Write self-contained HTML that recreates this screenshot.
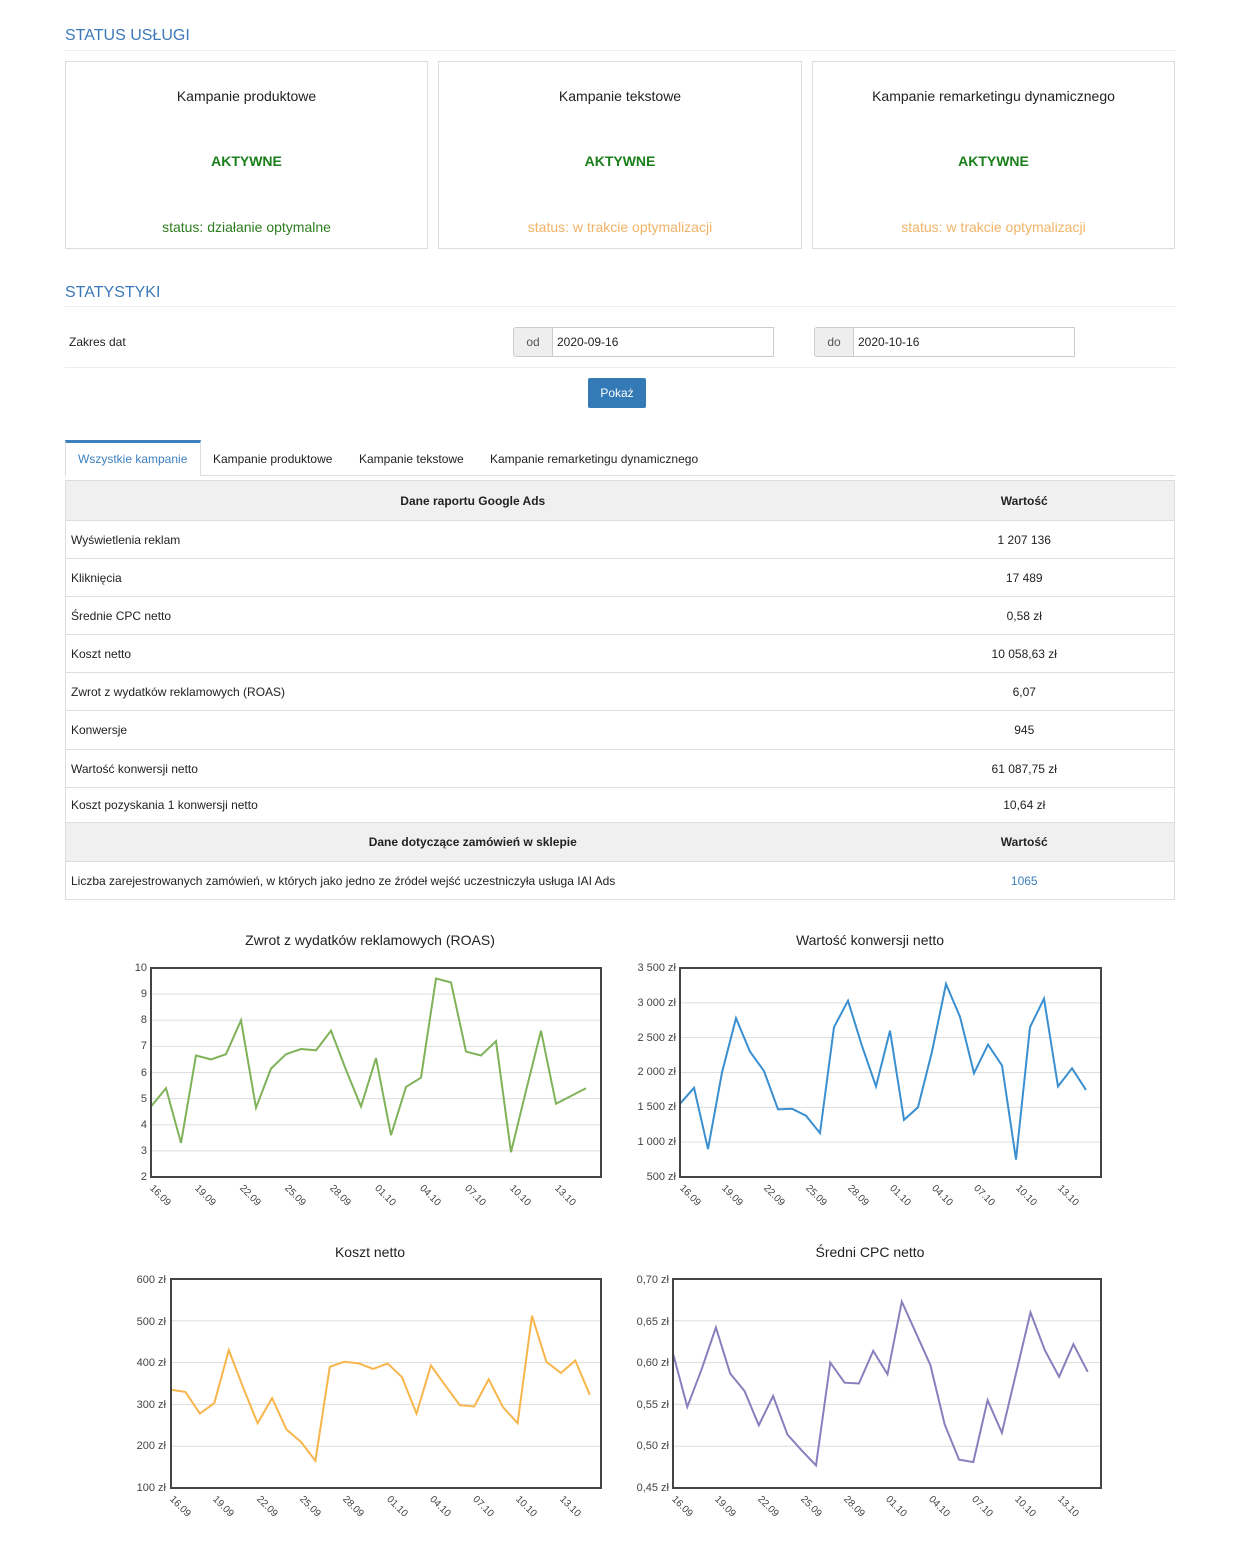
<!DOCTYPE html>
<html><head><meta charset="utf-8">
<style>
*{box-sizing:border-box;margin:0;padding:0}
body{width:1246px;height:1562px;background:#fff;font-family:"Liberation Sans",Arial,sans-serif;color:#222;position:relative;overflow:hidden}
.a{position:absolute}
.h{color:#3d78b8;font-size:16px;left:65px}
.hl{left:65px;width:1110px;height:1px;background:#eee}
.card{top:61px;height:188px;border:1px solid #ddd;text-align:center;font-size:14px}
.card .t{position:absolute;top:26px;left:0;right:0}
.card .k{position:absolute;top:91px;left:0;right:0;color:#1a7f1a;font-weight:bold}
.card .s{position:absolute;top:157px;left:0;right:0}
.or{color:#f2b366}.gr{color:#2e7d1e}
.addon{background:#eee;border:1px solid #ccc;border-radius:3px 0 0 3px;font-size:12px;color:#555;text-align:center;line-height:28px;height:30px;width:40px}
.inp{border:1px solid #ccc;font-size:12px;line-height:28px;height:30px;padding-left:4px}
table{border-collapse:collapse;font-size:12px}
td{border-top:1px solid #ddd;padding-left:5px}
.hd td{background:#f0f0f0;font-weight:bold;text-align:center}
td.v{text-align:center;width:300px;padding:0}
.ct{font-size:14px;text-align:center;width:500px}
.yl{display:flex;flex-direction:column;justify-content:space-between;text-align:right;font-size:11px;color:#444;line-height:14px}
.xl{font-size:10px;color:#444;transform:rotate(45deg);transform-origin:0 0;white-space:nowrap}
</style></head><body>
<div class="a h" style="top:27px">STATUS USŁUGI</div>
<div class="a hl" style="top:50px"></div>
<div class="a card" style="left:65px;width:363px"><div class="t">Kampanie produktowe</div><div class="k">AKTYWNE</div><div class="s gr">status: działanie optymalne</div></div>
<div class="a card" style="left:438px;width:364px"><div class="t">Kampanie tekstowe</div><div class="k">AKTYWNE</div><div class="s or">status: w trakcie optymalizacji</div></div>
<div class="a card" style="left:812px;width:363px"><div class="t">Kampanie remarketingu dynamicznego</div><div class="k">AKTYWNE</div><div class="s or">status: w trakcie optymalizacji</div></div>

<div class="a h" style="top:284px">STATYSTYKI</div>
<div class="a hl" style="top:306px"></div>
<div class="a" style="left:69px;top:335px;font-size:12px">Zakres dat</div>
<div class="a addon" style="left:513px;top:327px">od</div>
<div class="a inp" style="left:552px;top:327px;width:222px">2020-09-16</div>
<div class="a addon" style="left:814px;top:327px">do</div>
<div class="a inp" style="left:853px;top:327px;width:222px">2020-10-16</div>
<div class="a hl" style="top:367px"></div>
<div class="a" style="left:588px;top:378px;width:58px;height:30px;background:#337ab7;color:#fff;font-size:12px;text-align:center;line-height:30px;border-radius:2px">Pokaż</div>

<div class="a" style="left:65px;top:440px;width:136px;height:36px;border:1px solid #ddd;border-top:3px solid #3d80c0;border-bottom:none;background:#fff;z-index:2"></div>
<div class="a" style="left:65px;top:475px;width:1110px;height:1px;background:#ddd"></div>
<div class="a" style="left:78px;top:452px;font-size:12px;color:#3d80c0;z-index:3">Wszystkie kampanie</div>
<div class="a" style="left:213px;top:452px;font-size:12px">Kampanie produktowe</div>
<div class="a" style="left:359px;top:452px;font-size:12px">Kampanie tekstowe</div>
<div class="a" style="left:490px;top:452px;font-size:12px">Kampanie remarketingu dynamicznego</div>

<table class="a" style="left:65px;top:480px;width:1110px;border:1px solid #ddd">
<tr class="hd" style="height:40px"><td>Dane raportu Google Ads</td><td class="v">Wartość</td></tr>
<tr style="height:38px"><td>Wyświetlenia reklam</td><td class="v">1 207 136</td></tr>
<tr style="height:38px"><td>Kliknięcia</td><td class="v">17 489</td></tr>
<tr style="height:38px"><td>Średnie CPC netto</td><td class="v">0,58 zł</td></tr>
<tr style="height:38px"><td>Koszt netto</td><td class="v">10 058,63 zł</td></tr>
<tr style="height:38px"><td>Zwrot z wydatków reklamowych (ROAS)</td><td class="v">6,07</td></tr>
<tr style="height:39px"><td>Konwersje</td><td class="v">945</td></tr>
<tr style="height:38px"><td>Wartość konwersji netto</td><td class="v">61 087,75 zł</td></tr>
<tr style="height:35px"><td>Koszt pozyskania 1 konwersji netto</td><td class="v">10,64 zł</td></tr>
<tr class="hd" style="height:39px"><td>Dane dotyczące zamówień w sklepie</td><td class="v">Wartość</td></tr>
<tr style="height:38px"><td>Liczba zarejestrowanych zamówień, w których jako jedno ze źródeł wejść uczestniczyła usługa IAI Ads</td><td class="v" style="color:#3d80c0">1065</td></tr>
</table>

<svg class="a" style="left:0;top:0" width="1246" height="1562" id="sv"></svg>

<div class="a ct" style="left:120px;top:932px">Zwrot z wydatków reklamowych (ROAS)</div>
<div class="a ct" style="left:620px;top:932px">Wartość konwersji netto</div>
<div class="a ct" style="left:120px;top:1244px">Koszt netto</div>
<div class="a ct" style="left:620px;top:1244px">Średni CPC netto</div>

<div class="a yl" style="left:100px;width:47px;top:961px;height:223px"><span>10</span><span>9</span><span>8</span><span>7</span><span>6</span><span>5</span><span>4</span><span>3</span><span>2</span></div>
<div class="a yl" style="left:600px;width:76px;top:961px;height:223px"><span>3 500 zł</span><span>3 000 zł</span><span>2 500 zł</span><span>2 000 zł</span><span>1 500 zł</span><span>1 000 zł</span><span>500 zł</span></div>
<div class="a yl" style="left:100px;width:66px;top:1273px;height:222px"><span>600 zł</span><span>500 zł</span><span>400 zł</span><span>300 zł</span><span>200 zł</span><span>100 zł</span></div>
<div class="a yl" style="left:600px;width:69px;top:1273px;height:222px"><span>0,70 zł</span><span>0,65 zł</span><span>0,60 zł</span><span>0,55 zł</span><span>0,50 zł</span><span>0,45 zł</span></div>

<div class="a xl" style="left:155px;top:1183px">16.09</div><div class="a xl" style="left:200px;top:1183px">19.09</div><div class="a xl" style="left:245px;top:1183px">22.09</div><div class="a xl" style="left:290px;top:1183px">25.09</div><div class="a xl" style="left:335px;top:1183px">28.09</div><div class="a xl" style="left:380px;top:1183px">01.10</div><div class="a xl" style="left:425px;top:1183px">04.10</div><div class="a xl" style="left:470px;top:1183px">07.10</div><div class="a xl" style="left:515px;top:1183px">10.10</div><div class="a xl" style="left:560px;top:1183px">13.10</div>

<div class="a xl" style="left:685px;top:1183px">16.09</div><div class="a xl" style="left:727px;top:1183px">19.09</div><div class="a xl" style="left:769px;top:1183px">22.09</div><div class="a xl" style="left:811px;top:1183px">25.09</div><div class="a xl" style="left:853px;top:1183px">28.09</div><div class="a xl" style="left:895px;top:1183px">01.10</div><div class="a xl" style="left:937px;top:1183px">04.10</div><div class="a xl" style="left:979px;top:1183px">07.10</div><div class="a xl" style="left:1021px;top:1183px">10.10</div><div class="a xl" style="left:1063px;top:1183px">13.10</div>

<div class="a xl" style="left:175px;top:1494px">16.09</div><div class="a xl" style="left:218px;top:1494px">19.09</div><div class="a xl" style="left:262px;top:1494px">22.09</div><div class="a xl" style="left:305px;top:1494px">25.09</div><div class="a xl" style="left:348px;top:1494px">28.09</div><div class="a xl" style="left:392px;top:1494px">01.10</div><div class="a xl" style="left:435px;top:1494px">04.10</div><div class="a xl" style="left:478px;top:1494px">07.10</div><div class="a xl" style="left:521px;top:1494px">10.10</div><div class="a xl" style="left:565px;top:1494px">13.10</div>

<div class="a xl" style="left:677px;top:1494px">16.09</div><div class="a xl" style="left:720px;top:1494px">19.09</div><div class="a xl" style="left:763px;top:1494px">22.09</div><div class="a xl" style="left:806px;top:1494px">25.09</div><div class="a xl" style="left:849px;top:1494px">28.09</div><div class="a xl" style="left:891px;top:1494px">01.10</div><div class="a xl" style="left:934px;top:1494px">04.10</div><div class="a xl" style="left:977px;top:1494px">07.10</div><div class="a xl" style="left:1020px;top:1494px">10.10</div><div class="a xl" style="left:1063px;top:1494px">13.10</div>

<script>
var sv=document.getElementById('sv'),ns='http://www.w3.org/2000/svg';
function el(n,a){var e=document.createElementNS(ns,n);for(var k in a)e.setAttribute(k,a[k]);sv.appendChild(e);}
function chart(x0,x1,y0,y1,mn,mx,ng,x00,st,vals,col){
 for(var i=1;i<ng;i++){var y=y0+(y1-y0)*i/ng;el('line',{x1:x0,x2:x1,y1:y,y2:y,stroke:'#ddd','stroke-width':1});}
 var p=vals.map(function(v,i){return (x00+i*st).toFixed(1)+','+(y1-(v-mn)/(mx-mn)*(y1-y0)).toFixed(1)}).join(' ');
 el('polyline',{points:p,fill:'none',stroke:col,'stroke-width':2,'stroke-linejoin':'miter'});
 el('rect',{x:x0,y:y0,width:x1-x0,height:y1-y0,fill:'none',stroke:'#444','stroke-width':2});
}
chart(151,601,968,1177,2,10,8,151,15,[4.7,5.4,3.3,6.65,6.5,6.7,8.0,4.65,6.15,6.7,6.9,6.85,7.6,6.1,4.7,6.55,3.6,5.45,5.8,9.6,9.45,6.8,6.65,7.2,2.95,5.3,7.6,4.8,5.1,5.4],'#7fb259');
chart(680,1101,968,1177,500,3500,6,680,14,[1550,1780,900,2000,2780,2300,2020,1470,1480,1380,1130,2650,3030,2380,1800,2600,1320,1500,2300,3270,2800,1990,2400,2100,750,2650,3060,1800,2060,1750],'#3a8fd0');
chart(171,601,1279,1488,100,600,5,171,14.44,[335,330,278,303,430,340,255,315,240,210,165,390,402,398,385,398,365,278,393,345,298,295,360,293,255,512,402,375,405,323],'#f7b64c');
chart(673,1101,1279,1488,0.45,0.70,5,673,14.3,[.611,.547,.592,.642,.587,.566,.525,.560,.514,.495,.477,.600,.576,.575,.614,.586,.673,.635,.597,.526,.484,.481,.555,.516,.588,.660,.615,.583,.622,.589],'#8a7fbd');
</script>
</body></html>
